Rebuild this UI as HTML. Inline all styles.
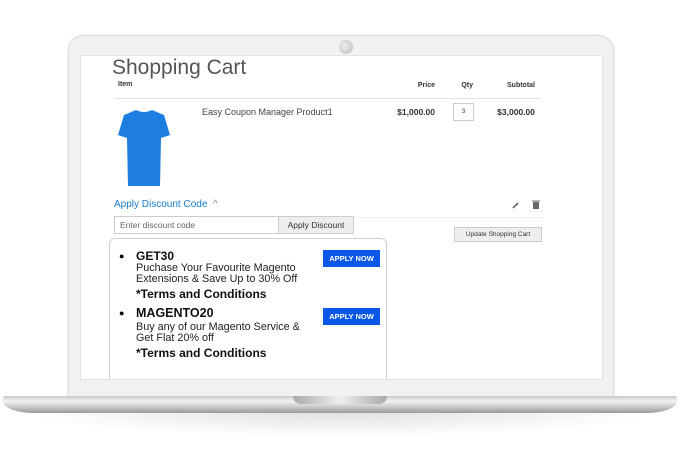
<!DOCTYPE html>
<html><head><meta charset="utf-8"><style>
*{margin:0;padding:0;box-sizing:border-box}
body{width:680px;height:450px;background:#fff;position:relative;overflow:hidden;font-family:"Liberation Sans",sans-serif}
.lid{position:absolute;left:68px;top:35px;width:546px;height:364px;background:#f1f1f1;border-radius:16px 16px 0 0;border:1px solid #dcdcdc;box-shadow:0 0 3px rgba(0,0,0,.12)}
.cam{position:absolute;left:339px;top:40px;width:14px;height:14px;border-radius:50%;background:radial-gradient(circle at 40% 40%,#eee,#bbb)}
.screen{position:absolute;left:80px;top:55px;width:523px;height:325px;background:#fff;overflow:hidden;border:1px solid #e4e4e4}
.base{position:absolute;left:3px;top:396px;width:674px;height:17px;border-radius:2px 2px 30px 30px/2px 2px 12px 12px;background:linear-gradient(#c9c9c9,#f2f2f2 30%,#cfcfcf 60%,#9a9a9a)}
.notch{position:absolute;left:293px;top:396px;width:94px;height:8px;border-radius:0 0 8px 8px;background:linear-gradient(90deg,#aaa,#eee 50%,#aaa)}
.shadow{position:absolute;left:20px;top:412px;width:640px;height:25px;background:radial-gradient(ellipse at 50% 0,rgba(0,0,0,.12),rgba(0,0,0,0) 70%)}
.t{position:absolute;white-space:nowrap;color:#333}
.r{position:absolute;white-space:nowrap;color:#333;text-align:right;width:80px}
</style></head><body>
<div class="lid"></div>
<div class="cam"></div>
<div class="screen">
 <div class="t" style="left:31px;top:0px;font-size:21px;color:#555;font-weight:300">Shopping Cart</div>
 <div class="t" style="left:37px;top:25px;font-size:7px;font-weight:bold">Item</div>
 <div class="r" style="left:274px;top:26px;font-size:7px;font-weight:bold">Price</div>
 <div class="r" style="left:312px;top:26px;font-size:7px;font-weight:bold">Qty</div>
 <div class="r" style="left:374px;top:26px;font-size:7px;font-weight:bold">Subtotal</div>
 <div style="position:absolute;left:33px;top:42px;width:427px;height:1px;background:#e3e3e3"></div>
 <svg style="position:absolute;left:36px;top:52px" width="54" height="80" viewBox="0 0 54 80"><path d="M19 2 Q27 6 35 2 L47 7 L53 27 L44 30 L43 78 L11 78 L10 30 L1 27 L7 7 Z" fill="#1e7de0"/></svg>
 <div class="t" style="left:121px;top:51px;font-size:9px;color:#444">Easy Coupon Manager Product1</div>
 <div class="r" style="left:274px;top:51px;font-size:8.5px;font-weight:bold">$1,000.00</div>
 <div style="position:absolute;left:372px;top:47px;width:21px;height:18px;border:1px solid #ccc;font-size:6px;text-align:center;line-height:16px;color:#333">3</div>
 <div class="r" style="left:374px;top:51px;font-size:8.5px;font-weight:bold">$3,000.00</div>
 <div class="t" style="left:33px;top:143px;font-size:10px;color:#1979c3">Apply Discount Code &nbsp;<span style="color:#888">^</span></div>
 <svg style="position:absolute;left:431px;top:145px" width="8" height="8" viewBox="0 0 8 8"><path d="M1 7 L6 2" stroke="#555" stroke-width="1.5"/></svg>
 <svg style="position:absolute;left:451px;top:144px" width="8" height="9" viewBox="0 0 8 9"><rect x="1" y="2" width="6" height="7" fill="#666"/><rect x="0" y="0.5" width="8" height="1" fill="#666"/></svg>
 <div style="position:absolute;left:33px;top:161px;width:430px;height:1px;background:#eee"></div>
 <div style="position:absolute;left:33px;top:160px;width:165px;height:18px;border:1px solid #ccc;font-size:8.5px;color:#666;padding:3px 5px;background:#fff">Enter discount code</div>
 <div style="position:absolute;left:197px;top:160px;width:76px;height:18px;border:1px solid #ccc;background:#eee;font-size:8.5px;color:#333;text-align:center;line-height:16px">Apply Discount</div>
 <div style="position:absolute;left:373px;top:171px;width:88px;height:15px;border:1px solid #ccc;background:#eee;font-size:6.5px;color:#333;text-align:center;line-height:13px">Update Shopping Cart</div>
 <div style="position:absolute;left:28px;top:182px;width:278px;height:160px;border:1px solid #d0d0d0;border-radius:6px;background:#fff">
  <div class="t" style="left:9px;top:12px;font-size:9px;color:#000">●</div>
  <div class="t" style="left:26px;top:10px;font-size:12px;font-weight:bold;color:#111">GET30</div>
  <div class="t" style="left:26px;top:24px;font-size:10.8px;line-height:11px;color:#222">Puchase Your Favourite Magento<br>Extensions &amp; Save Up to 30% Off</div>
  <div class="t" style="left:26px;top:48px;font-size:12px;font-weight:bold;color:#111">*Terms and Conditions</div>
  <div style="position:absolute;left:213px;top:11px;width:57px;height:17px;background:#0b57e8;color:#fff;font-size:7.5px;font-weight:bold;text-align:center;line-height:17px">APPLY NOW</div>
  <div class="t" style="left:9px;top:69px;font-size:9px;color:#000">●</div>
  <div class="t" style="left:26px;top:67px;font-size:12.5px;font-weight:bold;color:#111">MAGENTO20</div>
  <div class="t" style="left:26px;top:83px;font-size:10.8px;line-height:11px;color:#222">Buy any of our Magento Service &amp;<br>Get Flat 20% off</div>
  <div class="t" style="left:26px;top:107px;font-size:12px;font-weight:bold;color:#111">*Terms and Conditions</div>
  <div style="position:absolute;left:213px;top:69px;width:57px;height:17px;background:#0b57e8;color:#fff;font-size:7.5px;font-weight:bold;text-align:center;line-height:17px">APPLY NOW</div>
 </div>
</div>
<div class="shadow"></div>
<div class="base"></div>
<div class="notch"></div>
</body></html>
